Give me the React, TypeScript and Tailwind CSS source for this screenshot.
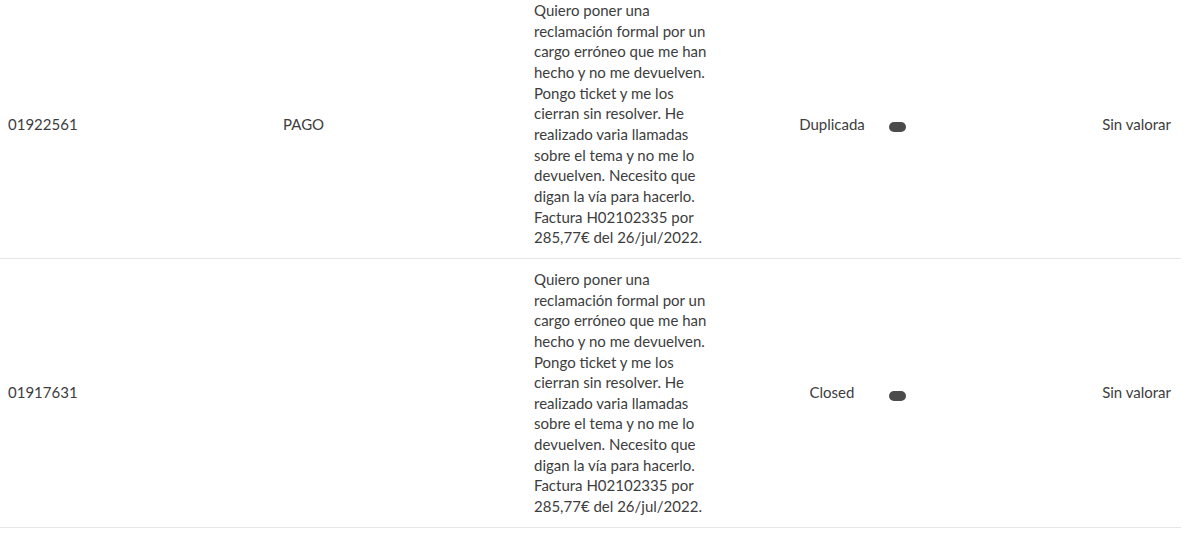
import React from 'react';

// Tickets table (scrolled view): id, category, description, status, flag, rating

interface Ticket {
  id: string;
  category: string;
  description: string;
  status: string;
  rating: string;
}

const DESC =
  'Quiero poner una reclamación formal por un cargo erróneo que me han hecho y no me devuelven. Pongo ticket y me los cierran sin resolver. He realizado varia llamadas sobre el tema y no me lo devuelven. Necesito que digan la vía para hacerlo. Factura H02102335 por 285,77€ del 26/jul/2022.';

const tickets: Ticket[] = [
  { id: '01922561', category: 'PAGO', description: DESC, status: 'Duplicada', rating: 'Sin valorar' },
  { id: '01917631', category: '', description: DESC, status: 'Closed', rating: 'Sin valorar' },
  {
    id: '01911204',
    category: '',
    description:
      'He llamado ya varias veces al servicio de atención al cliente y siguen sin darme una solución. Me dicen que el cargo es correcto pero no lo es, ya que di de baja el servicio antes de la fecha de facturación. Solicito que me devuelvan el importe cuanto antes.',
    status: 'Closed',
    rating: 'Sin valorar',
  },
];

const App: React.FC = () => {
  return (
    <div className="w-[1200px] h-[541px] overflow-hidden bg-white">
      <div
        className="w-[1181px] -mt-[10px] text-[15px] leading-[20.65px] text-[#3d3d3d]"
        style={{ fontFamily: 'Lato, "Noto Sans", sans-serif' }}
      >
        {tickets.map((t) => (
          <div key={t.id} className="flex items-center border-b border-[#e6e6e6]">
            <div className="w-[275px] shrink-0 pl-2">{t.id}</div>
            <div className="w-[251px] shrink-0 pl-2">{t.category}</div>
            <div className="w-[200px] shrink-0 px-2 py-2.5">
              <p className="w-[178px]">{t.description}</p>
            </div>
            <div className="w-[212px] shrink-0 text-center">{t.status}</div>
            <div className="w-[100px] shrink-0 pt-[6px]">
              <span className="block ml-[-49px] w-[17px] h-[10px] rounded-full bg-[#4b4b4b]" />
            </div>
            <div className="flex-1 pr-[10px] text-right">{t.rating}</div>
          </div>
        ))}
      </div>
    </div>
  );
};

export default App;
